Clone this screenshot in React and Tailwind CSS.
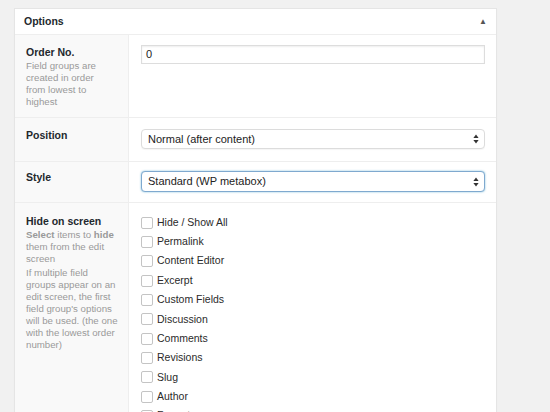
import React from 'react'

const opcoesTela = [
  'Hide / Show All',
  'Permalink',
  'Content Editor',
  'Excerpt',
  'Custom Fields',
  'Discussion',
  'Comments',
  'Revisions',
  'Slug',
  'Author',
  'Format',
]

// setinhas de cima/baixo do select nativo do mac
function SetasSelect() {
  return (
    <svg width="6" height="10" viewBox="0 0 6 10" className="shrink-0">
      <path d="M3 0.5 L5.6 4 H0.4 Z" fill="#333" />
      <path d="M3 9.5 L5.6 6 H0.4 Z" fill="#333" />
    </svg>
  )
}

function SelectFalso({ valor, focado }) {
  return (
    <div
      className={`flex items-center justify-between rounded-[4px] bg-white pl-[6px] pr-[5px] text-[11px] text-[#222] ${
        focado
          ? 'h-[21px] border border-[#7fa9cf] shadow-[0_0_2px_rgba(30,140,190,0.6)]'
          : 'h-[20px] border border-[#dcdcdc] shadow-[0_1px_1px_rgba(0,0,0,0.04)]'
      }`}
    >
      <span>{valor}</span>
      <SetasSelect />
    </div>
  )
}

function Rotulo({ children }) {
  return <div className="text-[10.5px] font-bold text-[#23282d] leading-[13px]">{children}</div>
}

export default function App() {
  return (
    <div
      className="h-[412px] overflow-hidden bg-[#f1f1f1] pt-[8px] pl-[14px]"
      style={{ fontFamily: '"Liberation Sans", Arial, sans-serif' }}
    >
      <div className="w-[483px] bg-white border border-[#e5e5e5] shadow-[0_1px_1px_rgba(0,0,0,0.04)]">
        {/* cabeçalho da caixa */}
        <div className="h-[25px] flex items-center justify-between pl-[9px] pr-[9px]">
          <span className="text-[10.5px] font-bold text-[#23282d]">Options</span>
          <span className="text-[8px] text-[#555] leading-none">▲</span>
        </div>

        {/* Order No. */}
        <div className="flex border-t border-[#eeeeee] h-[83px]">
          <div className="w-[114px] shrink-0 bg-[#f9f9f9] border-r border-[#eeeeee] pl-[11px] pt-[11px]">
            <Rotulo>Order No.</Rotulo>
            <p className="mt-[1px] text-[9.7px] leading-[12px] text-[#999]">
              Field groups are<br />
              created in order<br />
              from lowest to<br />
              highest
            </p>
          </div>
          <div className="flex-1 pl-[12px] pr-[11px] pt-[10px]">
            <div className="h-[19px] border border-[#dddddd] shadow-[inset_0_1px_2px_rgba(0,0,0,0.07)] flex items-center pl-[4px] text-[11px] text-[#222]">
              0
            </div>
          </div>
        </div>

        {/* Position */}
        <div className="flex border-t border-[#eeeeee] h-[44px]">
          <div className="w-[114px] shrink-0 bg-[#f9f9f9] border-r border-[#eeeeee] pl-[11px] pt-[11px]">
            <Rotulo>Position</Rotulo>
          </div>
          <div className="flex-1 pl-[12px] pr-[11px] pt-[11px]">
            <SelectFalso valor="Normal (after content)" />
          </div>
        </div>

        {/* Style */}
        <div className="flex border-t border-[#eeeeee] h-[41px]">
          <div className="w-[114px] shrink-0 bg-[#f9f9f9] border-r border-[#eeeeee] pl-[11px] pt-[9px]">
            <Rotulo>Style</Rotulo>
          </div>
          <div className="flex-1 pl-[12px] pr-[11px] pt-[9px]">
            <SelectFalso valor="Standard (WP metabox)" focado />
          </div>
        </div>

        {/* Hide on screen */}
        <div className="flex border-t border-[#eeeeee] h-[260px]">
          <div className="w-[114px] shrink-0 bg-[#f9f9f9] border-r border-[#eeeeee] pl-[11px] pt-[12px]">
            <Rotulo>Hide on screen</Rotulo>
            <p className="mt-[1px] text-[9.7px] leading-[12px] text-[#999]">
              <b>Select</b> items to <b>hide</b><br />
              them from the edit<br />
              screen
            </p>
            <p className="mt-[2px] text-[9.7px] leading-[12px] text-[#999]">
              If multiple field<br />
              groups appear on an<br />
              edit screen, the first<br />
              field group's options<br />
              will be used. (the one<br />
              with the lowest order<br />
              number)
            </p>
          </div>
          <div className="flex-1 pl-[12px] pr-[11px] pt-[10px]">
            <ul className="flex flex-col">
              {opcoesTela.map((op) => (
                <li key={op} className="h-[19.35px] flex items-center gap-[4px]">
                  <span className="w-[12px] h-[12px] border border-[#c4c4c4] rounded-[2px] bg-white shrink-0" />
                  <span className="text-[10.5px] text-[#2a2a2a]">{op}</span>
                </li>
              ))}
            </ul>
          </div>
        </div>
      </div>
    </div>
  )
}
